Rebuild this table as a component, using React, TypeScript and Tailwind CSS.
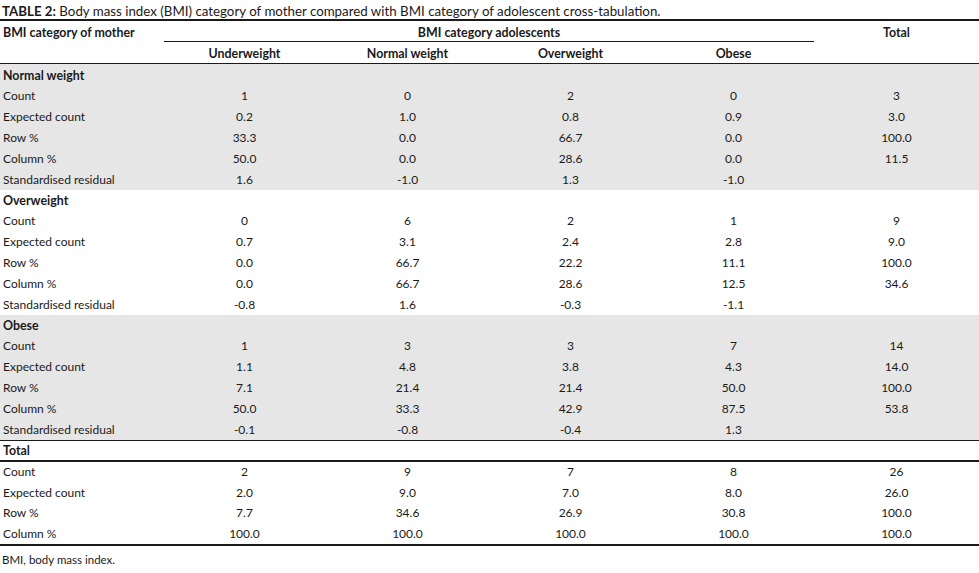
const groups = [
  {
    name: "Normal weight",
    shaded: true,
    rows: [
      ["Count", "1", "0", "2", "0", "3"],
      ["Expected count", "0.2", "1.0", "0.8", "0.9", "3.0"],
      ["Row %", "33.3", "0.0", "66.7", "0.0", "100.0"],
      ["Column %", "50.0", "0.0", "28.6", "0.0", "11.5"],
      ["Standardised residual", "1.6", "-1.0", "1.3", "-1.0", ""],
    ],
  },
  {
    name: "Overweight",
    shaded: false,
    rows: [
      ["Count", "0", "6", "2", "1", "9"],
      ["Expected count", "0.7", "3.1", "2.4", "2.8", "9.0"],
      ["Row %", "0.0", "66.7", "22.2", "11.1", "100.0"],
      ["Column %", "0.0", "66.7", "28.6", "12.5", "34.6"],
      ["Standardised residual", "-0.8", "1.6", "-0.3", "-1.1", ""],
    ],
  },
  {
    name: "Obese",
    shaded: true,
    rows: [
      ["Count", "1", "3", "3", "7", "14"],
      ["Expected count", "1.1", "4.8", "3.8", "4.3", "14.0"],
      ["Row %", "7.1", "21.4", "21.4", "50.0", "100.0"],
      ["Column %", "50.0", "33.3", "42.9", "87.5", "53.8"],
      ["Standardised residual", "-0.1", "-0.8", "-0.4", "1.3", ""],
    ],
  },
]

const totals = [
  ["Count", "2", "9", "7", "8", "26"],
  ["Expected count", "2.0", "9.0", "7.0", "8.0", "26.0"],
  ["Row %", "7.7", "34.6", "26.9", "30.8", "100.0"],
  ["Column %", "100.0", "100.0", "100.0", "100.0", "100.0"],
]

function Row({ cells }: { cells: string[] }) {
  return (
    <div className="grid grid-cols-[163px_repeat(5,163px)] h-[21px] items-center">
      <div className="pl-[3px]">{cells[0]}</div>
      {cells.slice(1).map((c, i) => (
        <div key={i} className="text-center">
          {c}
        </div>
      ))}
    </div>
  )
}

export default function App() {
  return (
    <div className="w-[979px] h-[573px] bg-white text-[#1a1a1a] text-[12px] font-['Lato',sans-serif] leading-none">
      {/* Title */}
      <div className="h-[19px] pl-[2px] pt-[5px] text-[13.3px]">
        <span className="font-bold">TABLE 2:</span> Body mass index (BMI) category of mother compared with BMI category of adolescent cross-tabulation.
      </div>
      <div className="h-[2px] bg-[#1a1a1a]" />

      {/* Header */}
      <div className="grid grid-cols-[163px_repeat(5,163px)] font-bold text-[12.4px]">
        <div className="pl-[3px] pt-[6px] row-span-2">BMI category of mother</div>
        <div className="col-span-4 h-[21px] pt-[6px] text-center border-b border-[#1a1a1a] mx-[1px]">
          BMI category adolescents
        </div>
        <div className="row-span-2 pt-[6px] text-center">Total</div>
        <div className="h-[21px] pt-[3px] flex items-center justify-center">Underweight</div>
        <div className="h-[21px] pt-[3px] flex items-center justify-center">Normal weight</div>
        <div className="h-[21px] pt-[3px] flex items-center justify-center">Overweight</div>
        <div className="h-[21px] pt-[3px] flex items-center justify-center">Obese</div>
      </div>
      <div className="h-[1px] bg-[#1a1a1a]" />

      {/* Body groups */}
      {groups.map((g, gi) => (
        <div key={g.name} className={g.shaded ? "bg-[#e6e6e6]" : ""}>
          <div
            className={`${gi === 0 ? "h-[21px]" : "h-[20px]"} pt-[3px] flex items-center pl-[3px] font-bold text-[12.4px]`}
          >
            {g.name}
          </div>
          {g.rows.map((r) => (
            <Row key={r[0]} cells={r} />
          ))}
        </div>
      ))}

      <div className="h-[1px] bg-[#1a1a1a]" />
      <div className="h-[19px] pt-[2px] flex items-center pl-[3px] font-bold text-[12.4px]">Total</div>
      <div className="h-[2px] bg-[#1a1a1a]" />
      <div className="[&>div]:h-[20.5px]">
        {totals.map((r) => (
          <Row key={r[0]} cells={r} />
        ))}
      </div>
      <div className="h-[2px] bg-[#1a1a1a]" />

      {/* Footnote */}
      <div className="pl-[2px] pt-[8px] text-[11.5px]">BMI, body mass index.</div>
    </div>
  )
}
